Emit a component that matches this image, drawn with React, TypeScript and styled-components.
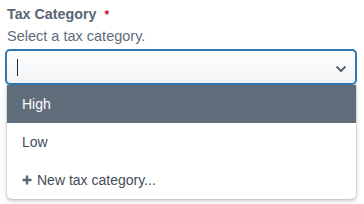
import styled, { createGlobalStyle } from "styled-components"

const GlobalStyle = createGlobalStyle`
body {
  margin: 0;
  background: #ffffff;
  font-family: "Liberation Sans", Arial, sans-serif;
}
`
const Field = styled.div`
width: 364px;
height: 204px;
padding: 4px 7px 0 5px;
box-sizing: border-box;
display: flex;
flex-direction: column;
`
const Label = styled.div`
padding-left: 2px;
font-size: 14.3px;
font-weight: 700;
line-height: 20px;
color: #596673;
`
const Required = styled.span`
color: #cf1124;
margin-left: 8px;
font-size: 12px;
`
const Hint = styled.div`
padding-left: 2px;
font-size: 14.5px;
line-height: 20px;
color: #606d7b;
margin-top: 1px;
`
const Combo = styled.div`
margin-top: 3px;
height: 36px;
box-sizing: border-box;
border: 2px solid #2c79b5;
border-radius: 5px;
background: linear-gradient(#ffffff, #f2f4f6);
display: flex;
align-items: center;
padding: 0 8px 0 10px;
`
const Caret = styled.div`
width: 1px;
height: 17px;
background: #1f2933;
`
const Chevron = styled.svg`
margin-left: auto;
margin-top: 3px;
`
const Menu = styled.ul`
list-style: none;
margin: 0 1px 0 2px;
padding: 0;
background: #ffffff;
border-radius: 0 0 5px 5px;
box-shadow: 0 0 0 1px rgba(96, 109, 123, 0.12), 0 2px 4px rgba(31, 41, 51, 0.25);
overflow: hidden;
`
const Option = styled.li<{ $active?: boolean }>`
height: 38px;
display: flex;
align-items: center;
gap: 5px;
padding: 0 15px;
font-size: 14px;
color: ${p => (p.$active ? "#ffffff" : "#3f4d5a")};
background: ${p => (p.$active ? "#606d7b" : "transparent")};
`

export default function App() {
  return (
    <>
      <GlobalStyle />
      <Field>
        <Label>
          Tax Category<Required>*</Required>
        </Label>
        <Hint>Select a tax category.</Hint>
        <Combo>
          <Caret />
          <Chevron width="12" height="8" viewBox="0 0 12 8">
            <path d="M1.5 1.5 L6 6 L10.5 1.5" fill="none" stroke="#596673" strokeWidth="2" />
          </Chevron>
        </Combo>
        <Menu>
          <Option $active>High</Option>
          <Option>Low</Option>
          <Option>
            <svg width="10" height="10" viewBox="0 0 10 10">
              <path d="M5 0.5 V9.5 M0.5 5 H9.5" stroke="#596673" strokeWidth="2.4" />
            </svg>
            New tax category...
          </Option>
        </Menu>
      </Field>
    </>
  )
}
